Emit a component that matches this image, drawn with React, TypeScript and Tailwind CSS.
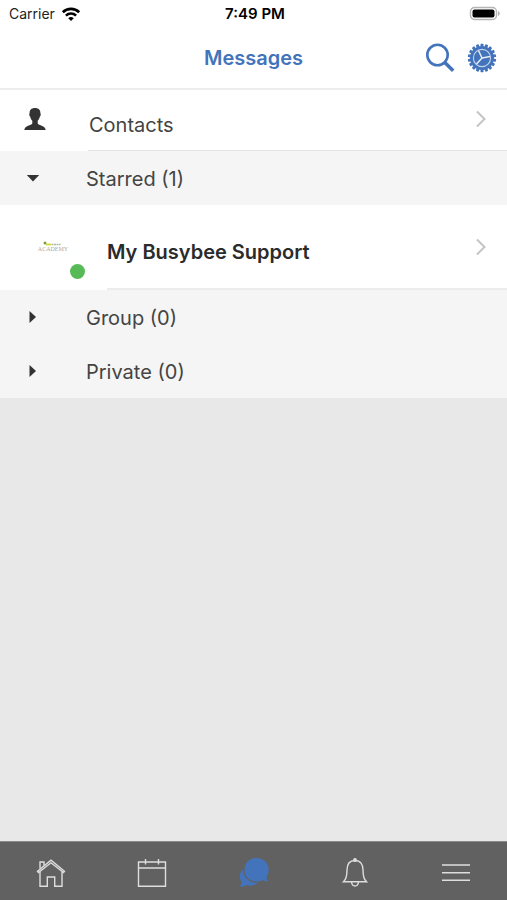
import type { ReactNode } from 'react';

const TEETH = Array.from({ length: 18 }, (_, i) => i * 20);

function WifiIcon() {
  return (
    <svg viewBox="0 0 20 15" className="h-[15px] w-5" aria-hidden="true">
      <g fill="none" stroke="#000" strokeWidth="2.6">
        <path d="M1.8 5.2a11.8 11.8 0 0 1 16.4 0" />
        <path d="M4.9 8.6a7.4 7.4 0 0 1 10.2 0" />
      </g>
      <path d="M10 14 7.200 11.200a4.100 4.100 0 0 1 5.600 0z" />
    </svg>
  );
}

function BatteryIcon() {
  return (
    <svg viewBox="0 0 32 16" className="h-4 w-8" aria-hidden="true">
      <rect x="1.5" y="1.5" width="26" height="12" rx="4" fill="#fff" stroke="#b5b5b5" strokeWidth="1.4" />
      <rect x="3.5" y="3.5" width="22" height="8" rx="2" fill="#000" />
      <path d="M29 5c2.4 1 2.4 4 0 5z" fill="#b5b5b5" />
    </svg>
  );
}

function SearchIcon() {
  return (
    <svg viewBox="0 0 30 30" className="size-[30px]" fill="none" stroke="#4374bb" aria-hidden="true">
      <circle cx="12.5" cy="12" r="10.2" strokeWidth="2.6" />
      <path d="m19.8 19.5 8.4 8.2" strokeWidth="3.6" />
    </svg>
  );
}

function GearIcon() {
  return (
    <svg viewBox="0 0 30 30" className="size-[30px]" aria-hidden="true">
      {TEETH.map((angle) => (
        <rect key={angle} x="13.5" y="0.8" width="3" height="4" rx=".6" fill="#4374bb" transform={`rotate(${angle} 15 15)`} />
      ))}
      <circle cx="15" cy="15" r="12" fill="#4374bb" />
      <circle cx="15" cy="15" r="8.600" fill="none" stroke="#c3d3eb" strokeWidth="1.100" />
      <path d="M15 15 11.500 7.500M15 15l8.200-1.500M15 15l-5.500 6" fill="none" stroke="#e6edf7" strokeWidth="1.500" />
    </svg>
  );
}

function PersonIcon() {
  return (
    <svg viewBox="0 0 22 22" className="h-[22px] w-[22px]" fill="#333" aria-hidden="true">
      <path d="M11 0C7.300 0 5.300 2.200 5.600 5.300 4.900 5.800 5.300 8 6.200 8.700 6.600 10.500 7.300 11.800 8.300 12.700V15.600C7.300 17.600.800 17.600.3 22H21.700C21.200 17.600 14.700 17.600 13.700 15.600V12.700C14.700 11.800 15.400 10.500 15.800 8.700 16.700 8 17.100 5.800 16.400 5.300 16.700 2.200 14.700 0 11 0Z" />
    </svg>
  );
}

function Chevron() {
  return (
    <svg viewBox="0 0 10 18" className="h-[18px] w-[10px]" fill="none" stroke="#c4c4c6" strokeWidth="2" aria-hidden="true">
      <path d="m1 1.500 7.500 7.500L1 16.500" />
    </svg>
  );
}

function AcademyLogo() {
  return (
    <div className="flex w-[30px] flex-col items-center">
      <svg viewBox="0 0 22 5" className="h-[5px] w-[22px]" aria-hidden="true">
        <circle cx="3" cy="2" r="1.500" fill="#7c9a4a" />
        <path d="M4 3.500h5" stroke="#d3d83c" strokeWidth="1.800" />
        <path d="M9.500 3.500h9" stroke="#aeb9a4" strokeWidth="1.500" strokeDasharray="2 .5" />
      </svg>
      <span className="font-['Liberation_Serif',serif] text-[6px] leading-[6px] text-[#aaa]">ACADEMY</span>
    </div>
  );
}

function Section({ title, open = false }: { title: string; open?: boolean }) {
  return (
    <button type="button" aria-expanded={open} className="flex w-full items-center bg-[#f5f5f5] pt-[14px] pb-3 text-left text-[20px] leading-7 text-[#444]">
      <span className="flex w-[86px] shrink-0 pl-[26px]">
        <svg viewBox="0 0 14 14" className="size-[14px]" fill="#333" aria-hidden="true">
          {open ? <path d="M.8 3h12.400L7 9.500z" /> : <path d="M3.500 0v12L10 6z" />}
        </svg>
      </span>
      {title}
    </button>
  );
}

function Tab({ label, children }: { label: string; children: ReactNode }) {
  return (
    <button type="button" aria-label={label} className="flex flex-1 items-center justify-center">
      <svg viewBox="0 0 32 32" className="size-8" fill="none" stroke="#dedede" strokeWidth="1.400" aria-hidden="true">
        {children}
      </svg>
    </button>
  );
}

export default function App() {
  return (
    <div className="flex min-h-screen flex-col bg-[#e8e8e8] font-['Inter',sans-serif]">
      <header className="border-b-2 border-[#ececec] bg-white">
        <div className="grid h-7 grid-cols-3 items-center pr-[6px] pl-[9px] text-[14px] leading-5 text-black">
          <div className="flex items-center gap-1.5 text-[#222]">
            Carrier
            <WifiIcon />
          </div>
          <div className="text-center text-[15px] font-semibold">7:49 PM</div>
          <div className="flex justify-end">
            <BatteryIcon />
          </div>
        </div>
        <div className="grid h-[60px] grid-cols-3 items-center px-[10px]">
          <h1 className="col-start-2 text-center text-[20px] leading-7 font-semibold text-[#4374bb]">Messages</h1>
          <div className="flex justify-end gap-3">
            <button type="button" aria-label="Search">
              <SearchIcon />
            </button>
            <button type="button" aria-label="Settings">
              <GearIcon />
            </button>
          </div>
        </div>
      </header>

      <main className="flex-1">
        <a href="#contacts" className="flex h-[61px] bg-white">
          <span className="w-[88px] shrink-0 pt-[18px] pl-6">
            <PersonIcon />
          </span>
          <span className="flex flex-1 justify-between border-b border-[#e4e4e4] pr-[21px] pl-px">
            <span className="pt-[21px] text-[20px] leading-7 text-[#444]">Contacts</span>
            <span className="pt-5">
              <Chevron />
            </span>
          </span>
        </a>
        <Section title="Starred (1)" open />
        <a href="#support" className="flex h-[85px] bg-white">
          <span className="relative w-[107px] shrink-0 pt-9 pl-[38px]">
            <AcademyLogo />
            <span className="absolute top-[59px] left-[70px] size-[15px] rounded-full bg-[#58b957]" />
          </span>
          <span className="flex flex-1 justify-between border-b-2 border-[#ececec] pr-[21px]">
            <span className="pt-[33px] text-[20px] leading-7 font-semibold text-[#2b2b2b]">My Busybee Support</span>
            <span className="pt-[33px]">
              <Chevron />
            </span>
          </span>
        </a>
        <Section title="Group (0)" />
        <Section title="Private (0)" />
      </main>

      <nav aria-label="Main" className="flex h-[59px] border-t border-[#8a8a8a] bg-[#616161] pt-[3px]">
        <Tab label="Home">
          <path d="M2.500 14.300 16 3.200l13.500 11.100-1 1.200L16 5.800 3.500 15.500z" />
          <path d="M5 14.500V29.300h7.300V20h7.400v9.300H27V14.500M5 11.500V5h4v3.500" />
        </Tab>
        <Tab label="Calendar">
          <path d="M2.500 5h27v24.300h-27zM2.500 11h27M9.500 2v5.500M22.500 2v5.500" />
        </Tab>
        <Tab label="Messages">
          <g fill="#4374bb" stroke="none">
            <path d="M18.500 1C11.500 1 6.500 6 6.500 12.700S12 24.500 18.500 24.500c2.500 0 4.500-.5 6.500-1.500 1.500 1 3.500 1.700 5.500 1.500-1.500-1.500-2-3-2-4.500 1.500-2 2.200-4.500 2.200-7.300C30.700 6 25.500 1 18.500 1Z" />
            <path d="M5 12.500c-3.500 3-4.500 8-1.500 12 .2 2-.5 3.500-2 5 3 .3 5-.2 7-1.500 4 1.300 8.500.8 11.500-2.200C12 26.500 5.500 21 5 12.500Z" />
          </g>
        </Tab>
        <Tab label="Notifications">
          <path d="M16 3.500c-5.500 0-8 4-8 9.500 0 7-1 9.500-3.500 11.800h23C25 22.500 24 20 24 13c0-5.500-2.500-9.500-8-9.500ZM12.500 25c.3 2.500 1.700 4 3.500 4s3.200-1.500 3.500-4" />
          <circle cx="16" cy="3" r="1.200" fill="#dedede" />
        </Tab>
        <Tab label="Menu">
          <path d="M2 8h28M2 15.700h28M2 23.300h28" />
        </Tab>
      </nav>
    </div>
  );
}
